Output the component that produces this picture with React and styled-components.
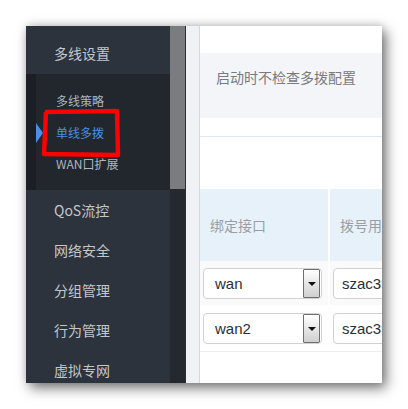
import React from "react";
import styled, { createGlobalStyle } from "styled-components";

const Global = createGlobalStyle`
  html, body { margin: 0; padding: 0; background: #fff; }
  body { font-family: "Noto Sans CJK SC", "Liberation Sans", sans-serif; }
`;

const Page = styled.div`
  width: 408px;
  height: 409px;
  padding: 26px 0 0 26px;
  box-sizing: border-box;
  background: #fff;
  overflow: hidden;
`;

const Frame = styled.div`
  position: relative;
  width: 356px;
  height: 357px;
  display: flex;
  overflow: hidden;
  box-shadow: 4px 5px 12px rgba(0, 0, 0, 0.55), 0 -2px 8px rgba(0, 0, 0, 0.12);
`;

const Sidebar = styled.nav`
  width: 144px;
  flex-shrink: 0;
  display: flex;
  flex-direction: column;
  background: #2c333c;
  overflow: hidden;
  & > * { flex-shrink: 0; }
`;

const GroupHead = styled.div`
  height: 48px;
  box-sizing: border-box;
  padding: 6px 0 0 28px;
  line-height: 42px;
  font-size: 14px;
  color: #c3c7cc;
  background: #2c333c;
`;

const SubMenu = styled.div`
  height: 116px;
  background: #22272e;
  border-left: 10px solid #1b1f24;
  padding-top: 11px;
  box-sizing: border-box;
  display: flex;
  flex-direction: column;
`;

const SubItem = styled.div`
  position: relative;
  height: 31.5px;
  line-height: 31.5px;
  padding-left: 20px;
  font-size: 12px;
  color: ${(p) => (p.$active ? "#4b90e2" : "#aeb6c0")};
  &::before {
    content: "";
    display: ${(p) => (p.$active ? "block" : "none")};
    position: absolute;
    left: 0;
    top: 6px;
    border-top: 10px solid transparent;
    border-bottom: 10px solid transparent;
    border-left: 7px solid #4a8fe6;
  }
`;

const MenuItem = styled.div`
  height: 40px;
  line-height: 40px;
  padding-left: 28px;
  font-size: 14px;
  color: #c3c7cc;
`;

const Scrollbar = styled.div`
  width: 15px;
  flex-shrink: 0;
  background: #242930;
  border-right: 1px solid #2a2f36;
  display: flex;
  flex-direction: column;
`;

const Thumb = styled.div`
  height: 163px;
  background: #7a7c80;
`;

const Gutter = styled.div`
  width: 13px;
  flex-shrink: 0;
  background: #f0f1f5;
  border-right: 1px solid #c9d9f7;
`;

const Main = styled.main`
  flex: 1;
  min-width: 0;
  background: #fff;
  padding-top: 27px;
  display: flex;
  flex-direction: column;
  overflow: hidden;
`;

const Notice = styled.div`
  height: 65px;
  box-sizing: border-box;
  background: #f4f5f8;
  padding: 14px 0 0 16px;
  line-height: 20px;
  font-size: 14px;
  color: #777b82;
  white-space: nowrap;
`;

const Section = styled.div`
  margin-top: 18px;
  border-top: 1px solid #dde7f6;
  padding-top: 52px;
`;

const Table = styled.div`
  display: grid;
  grid-template-columns: 128px 140px;
  column-gap: 2px;
  width: 270px;
  border-bottom: 1px solid #eeeeee;
`;

const HeadCell = styled.div`
  height: 72px;
  background: #e6f1fa;
  display: flex;
  align-items: center;
  padding-left: 10px;
  font-size: 14px;
  color: #9a9ea4;
  white-space: nowrap;
`;

const Cell = styled.div`
  height: ${(p) => (p.$first ? "44px" : "46px")};
  background: ${(p) => (p.$shade ? "#fafafa" : "#fff")};
  padding: ${(p) => (p.$first ? "7px 0 0 3px" : "8px 0 0 3px")};
  box-sizing: border-box;
`;

const Select = styled.div`
  width: ${(p) => p.$w}px;
  height: 31px;
  box-sizing: border-box;
  border: 1px solid #d2d2d2;
  border-radius: 4px;
  background: #fff;
  display: flex;
  align-items: center;
  justify-content: space-between;
  padding: 0 1px 0 ${(p) => p.$pad}px;
  font-family: "Liberation Sans", Arial, sans-serif;
  font-size: 15px;
  color: #2a2f36;
  white-space: nowrap;
  overflow: hidden;
`;

const DropBtn = styled.div`
  width: 15px;
  height: 27px;
  border: 1px solid #6e6e6e;
  border-radius: 1px;
  background: linear-gradient(#ffffff, #cfcfcf);
  display: flex;
  align-items: center;
  justify-content: center;
  &::after {
    content: "";
    border-left: 4px solid transparent;
    border-right: 4px solid transparent;
    border-top: 4px solid #111;
  }
`;

const Mark = styled.svg`
  position: absolute;
  left: 0;
  top: 0;
  pointer-events: none;
`;

export default function App() {
  return (
    <>
      <Global />
      <Page>
        <Frame>
          <Sidebar>
            <GroupHead>多线设置</GroupHead>
            <SubMenu>
              <SubItem>多线策略</SubItem>
              <SubItem $active>单线多拨</SubItem>
              <SubItem>WAN口扩展</SubItem>
            </SubMenu>
            <MenuItem>QoS流控</MenuItem>
            <MenuItem>网络安全</MenuItem>
            <MenuItem>分组管理</MenuItem>
            <MenuItem>行为管理</MenuItem>
            <MenuItem>虚拟专网</MenuItem>
          </Sidebar>
          <Scrollbar>
            <Thumb />
          </Scrollbar>
          <Gutter />
          <Main>
            <Notice>启动时不检查多拨配置</Notice>
            <Section>
              <Table>
                <HeadCell>绑定接口</HeadCell>
                <HeadCell>拨号用户名</HeadCell>
                <Cell $first $shade>
                  <Select $w={119} $pad={11}>
                    wan
                    <DropBtn />
                  </Select>
                </Cell>
                <Cell $first $shade>
                  <Select $w={140} $pad={8}>szac3998</Select>
                </Cell>
                <Cell>
                  <Select $w={119} $pad={11}>
                    wan2
                    <DropBtn />
                  </Select>
                </Cell>
                <Cell>
                  <Select $w={140} $pad={8}>szac3998</Select>
                </Cell>
              </Table>
            </Section>
          </Main>
          <Mark width="356" height="357" viewBox="0 0 356 357">
            <path
              d="M19 86 L91 85 L92 129 L18 128 L20 86"
              fill="none"
              stroke="#ff0000"
              strokeWidth="4.5"
              strokeLinejoin="round"
            />
          </Mark>
        </Frame>
      </Page>
    </>
  );
}
